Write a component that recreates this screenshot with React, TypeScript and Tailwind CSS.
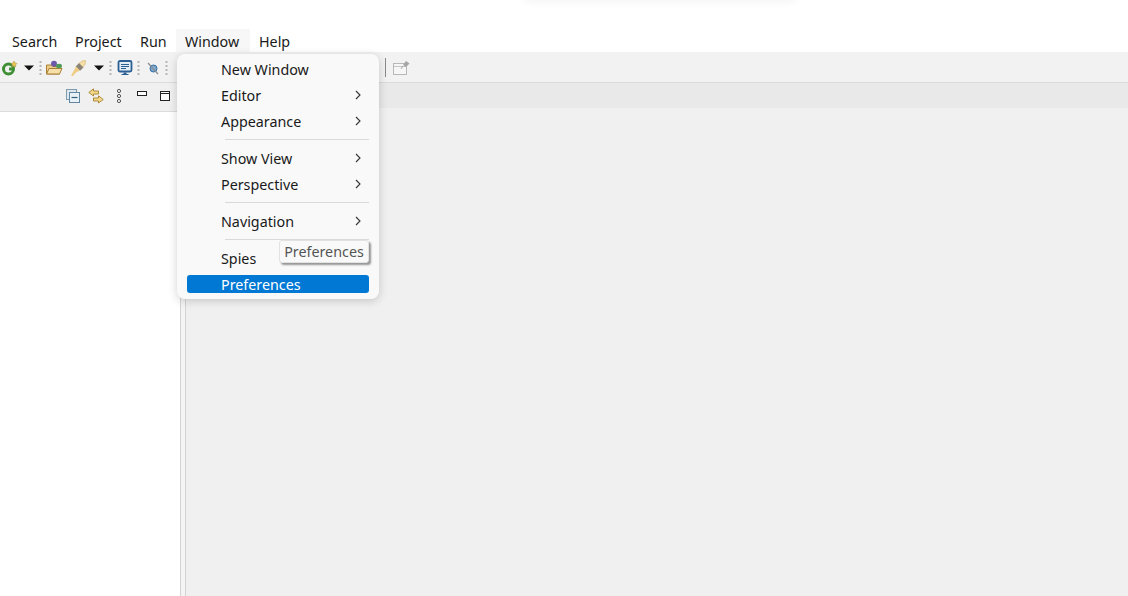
const font = { fontFamily: '"Noto Sans", "Open Sans", sans-serif' }

function Caret() {
  return (
    <svg width="10" height="6" viewBox="0 0 10 6" className="shrink-0">
      <path d="M0 0.500h10L5 5.500z" fill="#111" />
    </svg>
  )
}

function Dots() {
  return (
    <svg width="3" height="16" viewBox="0 0 3 16" className="shrink-0">
      {[1, 5, 9, 13].map((y) => (
        <rect key={y} x="0.500" y={y} width="2" height="2" fill="#b5b5b5" />
      ))}
    </svg>
  )
}

function RunIcon() {
  return (
    <svg width="16" height="16" viewBox="0 0 16 16" className="shrink-0">
      <circle cx="6.500" cy="9" r="5" fill="none" stroke="#3f8f35" strokeWidth="3" />
      <path d="M7 7.500h5v3H7z" fill="#3f8f35" />
      <path d="M12 1l1 2 2 .5-1.500 1.500.3 2-1.800-1-1.800 1 .3-2L9 3.500l2-.5z" fill="#e9c65a" stroke="#a98b2e" strokeWidth="0.500" />
    </svg>
  )
}

function FolderIcon() {
  return (
    <svg width="17" height="16" viewBox="0 0 17 16" className="shrink-0">
      <path d="M0.500 5h5L7 6.500h6.500V14H0.500z" fill="#eccb86" stroke="#a97f36" />
      <path d="M0.500 14L3 8.500h13L13.500 14z" fill="#f6dfa8" stroke="#a97f36" />
      <circle cx="8" cy="3.800" r="3" fill="#6c5aa8" />
      <ellipse cx="13" cy="6" rx="3" ry="2.200" fill="#4f9a5a" />
    </svg>
  )
}

function PenIcon() {
  return (
    <svg width="17" height="17" viewBox="0 0 17 17" className="shrink-0">
      <path d="M9 3.500l3-2.500 3.500-.5-.5 4-3 3.500z" fill="#f3dfa7" stroke="#d8b76c" strokeWidth="0.700" />
      <path d="M6 6.500L9 3.500l4 4-3 3z" fill="#8b8377" stroke="#6e675d" strokeWidth="0.500" />
      <path d="M6 6.500l4 4-4 2-3 3.500-2 0 2-4z" fill="#f0cd84" />
    </svg>
  )
}

function MonitorIcon() {
  return (
    <svg width="16" height="16" viewBox="0 0 16 16" className="shrink-0">
      <rect x="1.500" y="1" width="13" height="10.500" rx="1.500" fill="#e3ebf4" stroke="#2a5f94" strokeWidth="1.800" />
      <path d="M4 4.500h8M4 6.500h8M4 8.500h5" stroke="#2a5f94" />
      <path d="M6.500 12.500h3v1.500h2v1h-7v-1h2z" fill="#2a5f94" />
    </svg>
  )
}

function NoLinkIcon() {
  return (
    <svg width="14" height="14" viewBox="0 0 14 14" className="shrink-0">
      <circle cx="7.500" cy="7.500" r="3.500" fill="#7fa9cc" stroke="#2f6da8" />
      <path d="M2 2l10 11" stroke="#8a8f94" strokeWidth="1.200" />
    </svg>
  )
}

function CollapseIcon() {
  return (
    <svg width="14" height="14" viewBox="0 0 14 14" className="shrink-0">
      <rect x="0.500" y="0.500" width="10" height="10" fill="#dfe8ee" stroke="#7f9aac" />
      <rect x="3.500" y="3.500" width="10" height="10" fill="#eaf1f6" stroke="#5f87a3" />
      <path d="M5.500 8.500h6" stroke="#2f6184" strokeWidth="1.200" />
    </svg>
  )
}

function LinkArrowsIcon() {
  return (
    <svg width="16" height="16" viewBox="0 0 16 16" className="shrink-0">
      <path d="M5.500 0.800L0.800 4.500l4.700 3.500V6h5V3h-5z" fill="#f5d98a" stroke="#a6822c" strokeWidth="0.900" />
      <path d="M10.500 7.800l4.700 3.700-4.700 3.500V13h-5v-3h5z" fill="#f5d98a" stroke="#a6822c" strokeWidth="0.900" />
    </svg>
  )
}

function ViewMenuIcon() {
  return (
    <svg width="6" height="14" viewBox="0 0 6 14" className="shrink-0">
      {[2, 7, 12].map((y) => (
        <circle key={y} cx="3" cy={y} r="1.600" fill="#f4f4f4" stroke="#555" />
      ))}
    </svg>
  )
}

function MinimizeIcon() {
  return (
    <svg width="10" height="5" viewBox="0 0 10 5" className="shrink-0">
      <rect x="0.500" y="0.500" width="9" height="4" fill="#fff" stroke="#222" />
    </svg>
  )
}

function MaximizeIcon() {
  return (
    <svg width="10" height="10" viewBox="0 0 10 10" className="shrink-0">
      <rect x="0.500" y="0.500" width="9" height="9" fill="#fff" stroke="#222" />
      <path d="M0.500 2.500h9" stroke="#222" />
    </svg>
  )
}

function PinIcon() {
  return (
    <svg width="18" height="16" viewBox="0 0 18 16" className="shrink-0">
      <rect x="0.500" y="3.500" width="13" height="11" fill="#f6f6f6" stroke="#b8b8b8" />
      <path d="M1 6.500h12" stroke="#c4c4c4" />
      <path d="M10 5l3-4 3.500 2.500-3.500 3.500z" fill="#a5a5a5" />
      <path d="M10 6l-2 3" stroke="#a5a5a5" />
    </svg>
  )
}

function Chevron() {
  return (
    <svg width="6" height="10" viewBox="0 0 6 10" className="shrink-0">
      <path d="M1 1l4 4-4 4" fill="none" stroke="#333" strokeWidth="1.100" />
    </svg>
  )
}

function MenuRow({ label, sub, active }: { label: string; sub?: boolean; active?: boolean }) {
  return (
    <div className="h-[26px] flex items-center px-[10px]">
      <div className={`h-[18px] flex-1 flex items-center justify-between pl-[34px] pr-[8px] rounded-[3px] ${active ? 'bg-[#0078d4] text-white' : 'text-[#1a1a1a]'}`}>
        <span className="pt-[2px]">{label}</span>
        {sub && <Chevron />}
      </div>
    </div>
  )
}

function MenuSep() {
  return (
    <div className="h-[11px] flex items-center pl-[48px] pr-[10px]">
      <div className="h-px flex-1 bg-[#d9d9d9]" />
    </div>
  )
}

const menus = [
  { name: 'Search', width: 'w-[63px]' },
  { name: 'Project', width: 'w-[65px]' },
  { name: 'Run', width: 'w-[45px]' },
  { name: 'Window', width: 'w-[74px] bg-[#f7f7f7]' },
  { name: 'Help', width: 'w-[50px]' },
]

export default function App() {
  return (
    <div className="relative w-[1128px] h-[596px] overflow-hidden bg-white flex flex-col text-[14.3px] leading-none" style={font}>
      {/* glow at the top */}
      <div className="absolute -top-[3px] left-[525px] w-[270px] h-[3px] shadow-[0_0_10px_rgba(0,0,0,0.12)]" />

      {/* Menu bar */}
      <div className="h-[52px] shrink-0 pt-[29px] pl-[3px] flex bg-white">
        {menus.map((m) => (
          <div key={m.name} className={`h-[23px] pl-[9px] flex items-center pt-[3px] text-[#1a1a1a] ${m.width}`}>
            {m.name}
          </div>
        ))}
      </div>

      {/* Toolbar */}
      <div className="h-[31px] shrink-0 bg-[#f2f2f2] border-b border-[#dcdcdc] flex items-center pl-[2px] pt-[2px]">
        <RunIcon />
        <div className="ml-[6px]"><Caret /></div>
        <div className="ml-[5px]"><Dots /></div>
        <div className="ml-[4px]"><FolderIcon /></div>
        <div className="ml-[7px]"><PenIcon /></div>
        <div className="ml-[7px]"><Caret /></div>
        <div className="ml-[5px]"><Dots /></div>
        <div className="ml-[5px]"><MonitorIcon /></div>
        <div className="ml-[4px]"><Dots /></div>
        <div className="ml-[6px]"><NoLinkIcon /></div>
        <div className="ml-[5px]"><Dots /></div>
        <div className="ml-[217px] -mt-[2px] w-px h-[19px] bg-[#8a8a8a]" />
        <div className="ml-[7px]"><PinIcon /></div>
      </div>

      {/* Workbench */}
      <div className="flex-1 flex min-h-0">
        <div className="w-[180px] shrink-0 flex flex-col bg-white">
          <div className="h-[29px] shrink-0 bg-[#f0f0f0] border-b border-[#dcdcdc] flex items-center pl-[66px] pb-[3px]">
            <CollapseIcon />
            <div className="ml-[8px]"><LinkArrowsIcon /></div>
            <div className="ml-[12px]"><ViewMenuIcon /></div>
            <div className="ml-[15px] -mt-[5px]"><MinimizeIcon /></div>
            <div className="ml-[13px]"><MaximizeIcon /></div>
          </div>
        </div>
        <div className="w-[6px] shrink-0 bg-[#f4f4f4] border-x border-x-[#d4d4d4]" />
        <div className="flex-1 flex flex-col bg-[#f0f0f0]">
          <div className="h-[25px] shrink-0 bg-[#e9e9e9]" />
        </div>
      </div>

      {/* Window menu */}
      <div className="absolute left-[177px] top-[54px] w-[202px] h-[245px] pt-[2px] bg-[#f9f9f9] rounded-[8px] shadow-[0_2px_10px_rgba(0,0,0,0.18)]">
        <MenuRow label="New Window" />
        <MenuRow label="Editor" sub />
        <MenuRow label="Appearance" sub />
        <MenuSep />
        <MenuRow label="Show View" sub />
        <MenuRow label="Perspective" sub />
        <MenuSep />
        <MenuRow label="Navigation" sub />
        <MenuSep />
        <MenuRow label="Spies" />
        <MenuRow label="Preferences" active />
      </div>

      {/* Tooltip */}
      <div className="absolute left-[279px] top-[240px] w-[90px] h-[23px] pt-[2px] flex items-center justify-center bg-[#f9f9f9] border border-[#e2e2e2] rounded-[3px] text-[#555] shadow-[2px_2px_2px_rgba(0,0,0,0.4)]">
        Preferences
      </div>
    </div>
  )
}
